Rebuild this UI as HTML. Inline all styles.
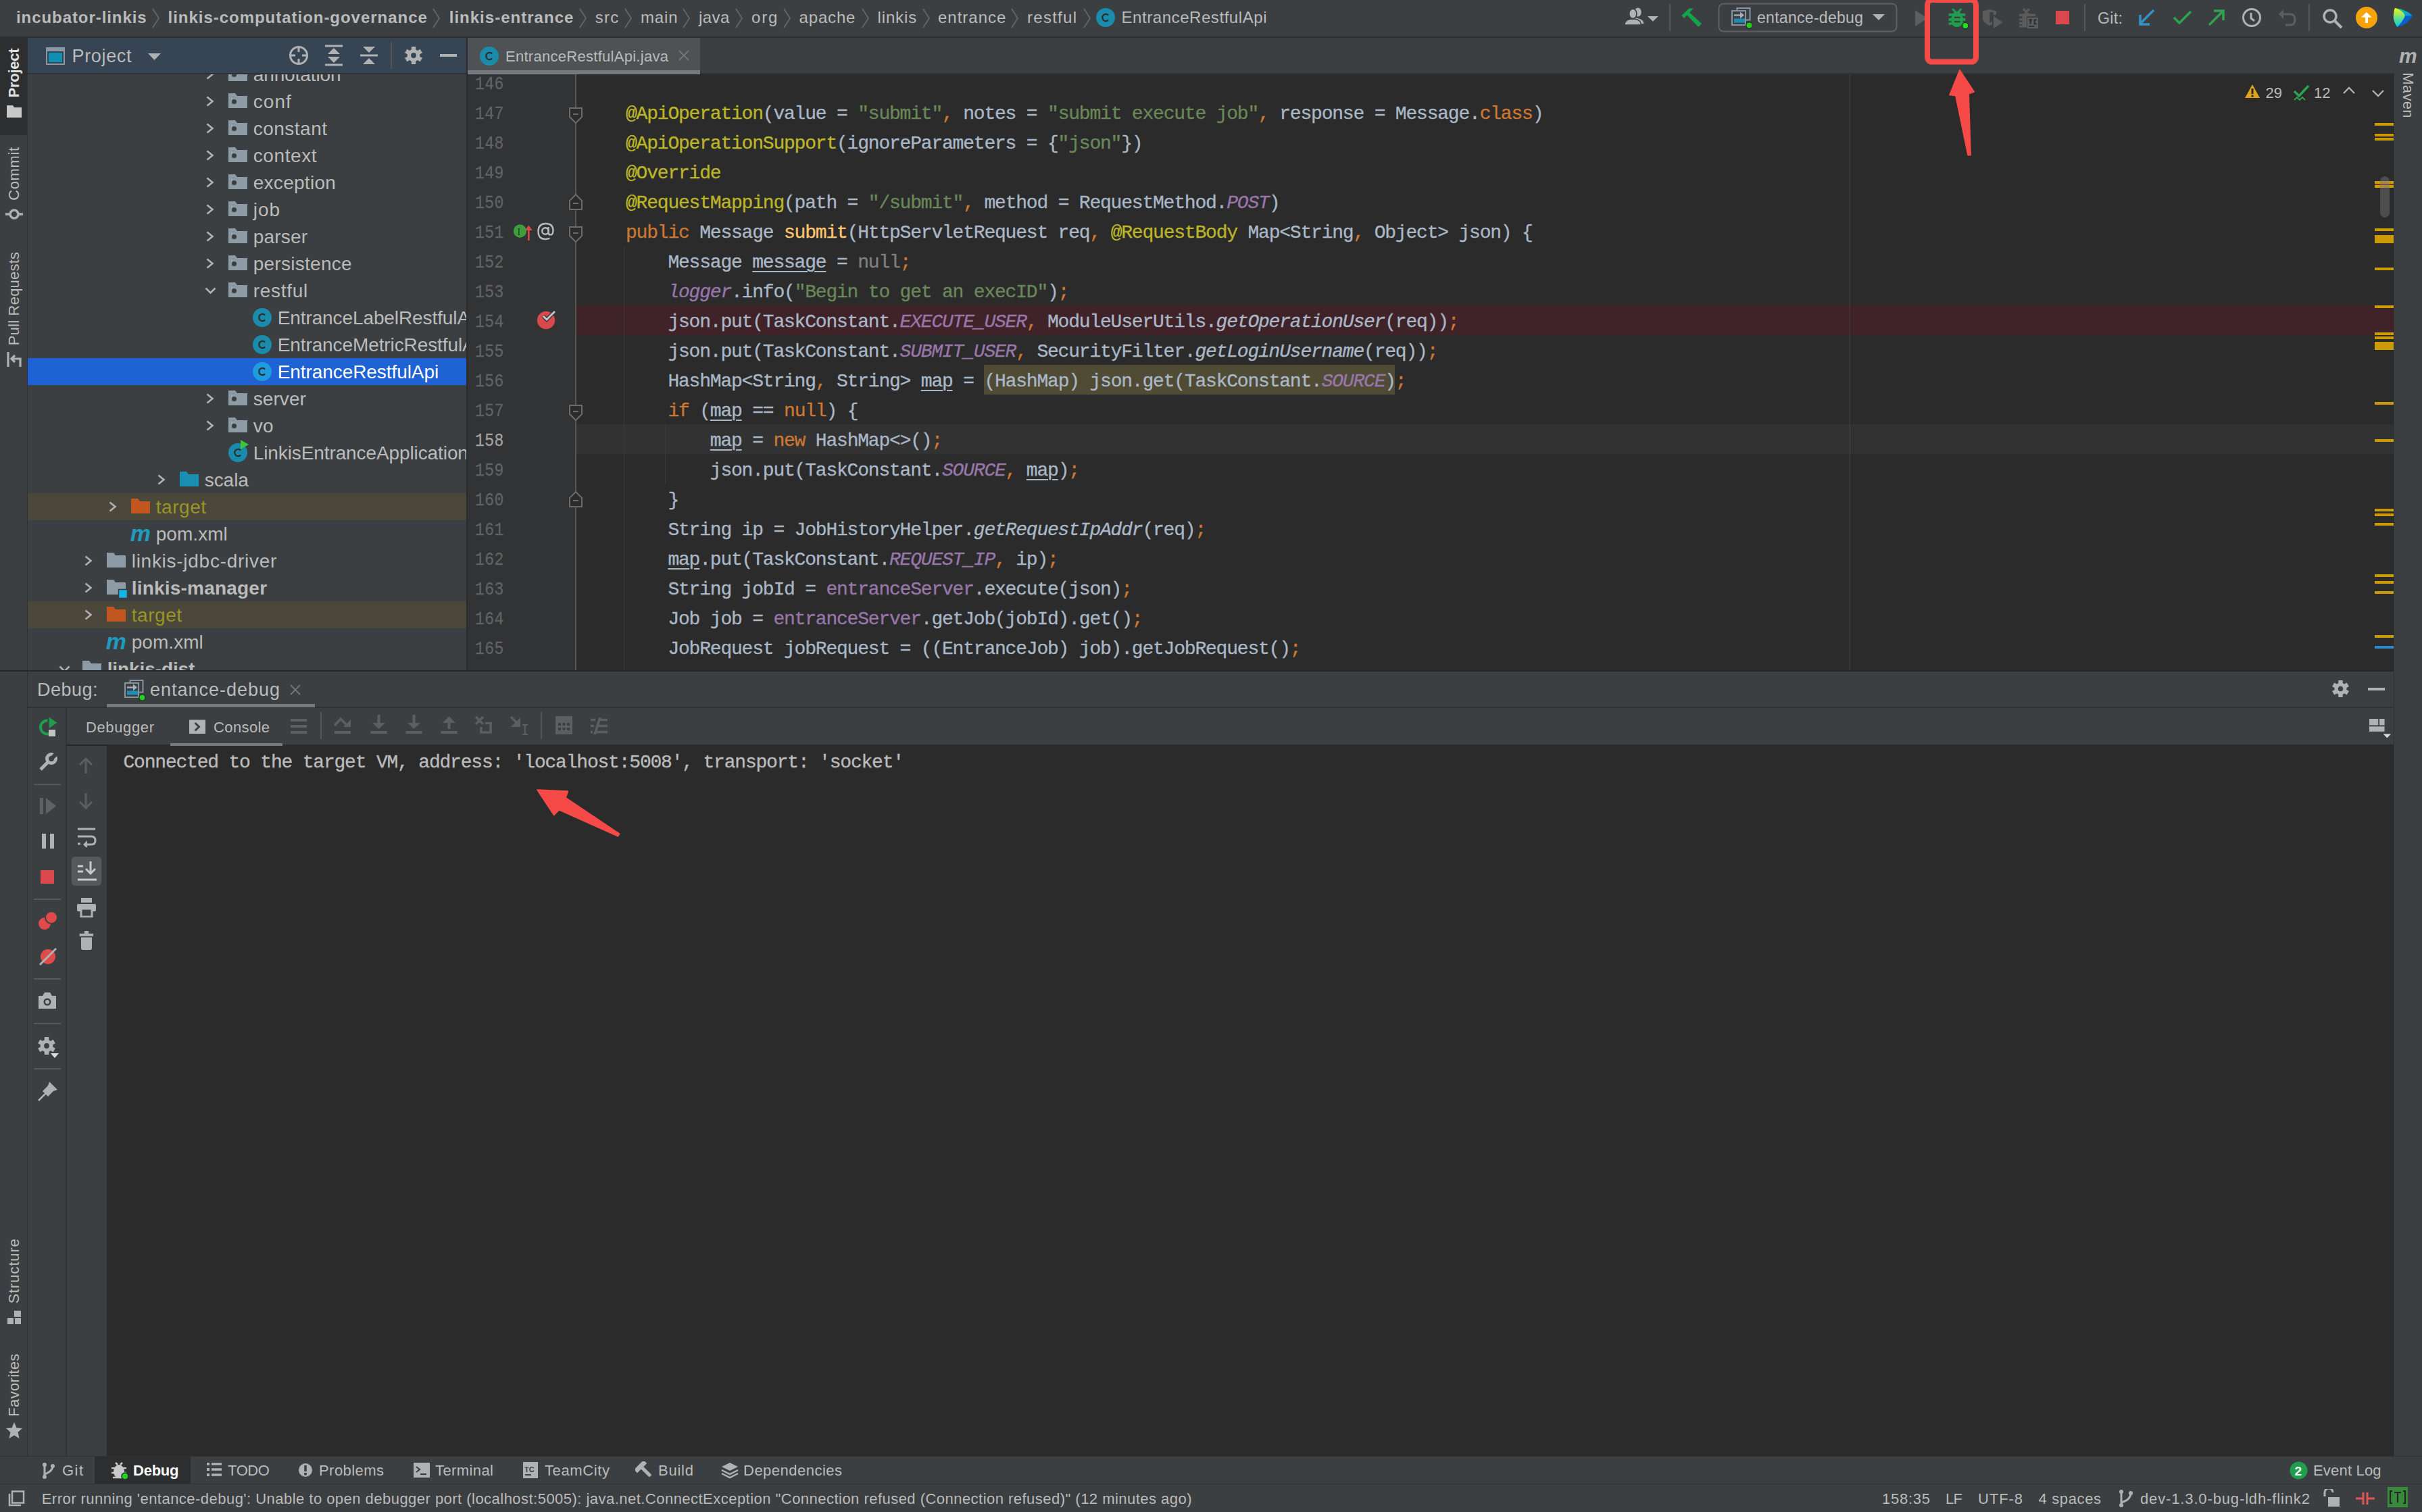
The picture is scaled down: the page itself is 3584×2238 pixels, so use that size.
<!DOCTYPE html><html><head><meta charset="utf-8"><style>
html,body{margin:0;padding:0;}
body{width:3584px;height:2238px;position:relative;overflow:hidden;background:#3C3F41;font-family:"Liberation Sans",sans-serif;}
body>div,body>svg{position:absolute;}
.t{white-space:pre;line-height:normal;}
</style></head><body>
<div style="left:0px;top:0px;width:3584px;height:54px;background:#3C3F41;"></div>
<div style="left:0px;top:54px;width:3584px;height:2px;background:#2E3032;"></div>
<div style="left:0px;top:56px;width:40px;height:2099px;background:#3C3F41;"></div>
<div style="left:40px;top:56px;width:2px;height:2099px;background:#2E3032;"></div>
<div style="left:0px;top:56px;width:40px;height:144px;background:#2C2E30;"></div>
<div style="left:3543px;top:56px;width:41px;height:2099px;background:#3C3F41;"></div>
<div style="left:3542px;top:56px;width:1px;height:2099px;background:#323232;"></div>
<div style="left:41px;top:56px;width:649px;height:52px;background:#364453;"></div>
<div style="left:41px;top:108px;width:649px;height:2px;background:#2E3134;"></div>
<div style="left:41px;top:110px;width:649px;height:882px;background:#3C3F41;"></div>
<div style="left:690px;top:56px;width:2px;height:937px;background:#2B2B2B;"></div>
<div style="left:692px;top:56px;width:2851px;height:54px;background:#3C3F41;"></div>
<div style="left:692px;top:56px;width:344px;height:54px;background:#4E5254;"></div>
<div style="left:692px;top:108px;width:2851px;height:2px;background:#303234;"></div>
<div style="left:692px;top:104px;width:344px;height:6px;background:#747A80;"></div>
<div style="left:692px;top:110px;width:160px;height:882px;background:#313335;"></div>
<div style="left:852px;top:110px;width:2690px;height:882px;background:#2B2B2B;"></div>
<div style="left:0px;top:992px;width:3542px;height:2px;background:#282828;"></div>
<div style="left:41px;top:994px;width:3501px;height:52px;background:#3C3F41;"></div>
<div style="left:41px;top:1046px;width:3501px;height:2px;background:#323232;"></div>
<div style="left:41px;top:1048px;width:3501px;height:54px;background:#3C3F41;"></div>
<div style="left:41px;top:1048px;width:56px;height:1107px;background:#3C3F41;"></div>
<div style="left:97px;top:1048px;width:2px;height:1107px;background:#323232;"></div>
<div style="left:99px;top:1102px;width:57px;height:1053px;background:#3C3F41;"></div>
<div style="left:99px;top:1102px;width:3443px;height:2px;background:#282828;"></div>
<div style="left:158px;top:1102px;width:3384px;height:1053px;background:#2B2B2B;"></div>
<div style="left:0px;top:2155px;width:3584px;height:41px;background:#3C3F41;"></div>
<div style="left:0px;top:2155px;width:3584px;height:1px;background:#323232;"></div>
<div style="left:0px;top:2196px;width:3584px;height:1px;background:#323232;"></div>
<div style="left:0px;top:2197px;width:3584px;height:41px;background:#3C3F41;"></div>
<div class="t" style="left:24px;top:12px;font-size:24px;color:#BBBBBB;font-weight:700;letter-spacing:0.93px;">incubator-linkis</div>
<div class="t" style="left:248.6px;top:12px;font-size:24px;color:#BBBBBB;font-weight:700;letter-spacing:0.97px;">linkis-computation-governance</div>
<div class="t" style="left:664.7px;top:12px;font-size:24px;color:#BBBBBB;font-weight:700;letter-spacing:1.02px;">linkis-entrance</div>
<div class="t" style="left:880.7px;top:12px;font-size:24px;color:#BBBBBB;letter-spacing:1.3px;">src</div>
<div class="t" style="left:948px;top:12px;font-size:24px;color:#BBBBBB;letter-spacing:0.83px;">main</div>
<div class="t" style="left:1034px;top:12px;font-size:24px;color:#BBBBBB;letter-spacing:0.46px;">java</div>
<div class="t" style="left:1112px;top:12px;font-size:24px;color:#BBBBBB;letter-spacing:1.81px;">org</div>
<div class="t" style="left:1182.5px;top:12px;font-size:24px;color:#BBBBBB;letter-spacing:0.84px;">apache</div>
<div class="t" style="left:1298.5px;top:12px;font-size:24px;color:#BBBBBB;letter-spacing:0.87px;">linkis</div>
<div class="t" style="left:1388px;top:12px;font-size:24px;color:#BBBBBB;letter-spacing:0.99px;">entrance</div>
<div class="t" style="left:1520px;top:12px;font-size:24px;color:#BBBBBB;letter-spacing:1.27px;">restful</div>
<svg style="left:225px;top:12px;" width="12" height="30" viewBox="0 0 12 30"><polyline points="1,1 10,15 1,29" fill="none" stroke="#5E686E" stroke-width="1.8"/></svg>
<svg style="left:640px;top:12px;" width="12" height="30" viewBox="0 0 12 30"><polyline points="1,1 10,15 1,29" fill="none" stroke="#5E686E" stroke-width="1.8"/></svg>
<svg style="left:856.5px;top:12px;" width="12" height="30" viewBox="0 0 12 30"><polyline points="1,1 10,15 1,29" fill="none" stroke="#5E686E" stroke-width="1.8"/></svg>
<svg style="left:924px;top:12px;" width="12" height="30" viewBox="0 0 12 30"><polyline points="1,1 10,15 1,29" fill="none" stroke="#5E686E" stroke-width="1.8"/></svg>
<svg style="left:1010px;top:12px;" width="12" height="30" viewBox="0 0 12 30"><polyline points="1,1 10,15 1,29" fill="none" stroke="#5E686E" stroke-width="1.8"/></svg>
<svg style="left:1088px;top:12px;" width="12" height="30" viewBox="0 0 12 30"><polyline points="1,1 10,15 1,29" fill="none" stroke="#5E686E" stroke-width="1.8"/></svg>
<svg style="left:1158.5px;top:12px;" width="12" height="30" viewBox="0 0 12 30"><polyline points="1,1 10,15 1,29" fill="none" stroke="#5E686E" stroke-width="1.8"/></svg>
<svg style="left:1274.5px;top:12px;" width="12" height="30" viewBox="0 0 12 30"><polyline points="1,1 10,15 1,29" fill="none" stroke="#5E686E" stroke-width="1.8"/></svg>
<svg style="left:1365px;top:12px;" width="12" height="30" viewBox="0 0 12 30"><polyline points="1,1 10,15 1,29" fill="none" stroke="#5E686E" stroke-width="1.8"/></svg>
<svg style="left:1496px;top:12px;" width="12" height="30" viewBox="0 0 12 30"><polyline points="1,1 10,15 1,29" fill="none" stroke="#5E686E" stroke-width="1.8"/></svg>
<svg style="left:1602.5px;top:12px;" width="12" height="30" viewBox="0 0 12 30"><polyline points="1,1 10,15 1,29" fill="none" stroke="#5E686E" stroke-width="1.8"/></svg>
<svg style="left:1622px;top:12px;" width="28" height="28" viewBox="0 0 28 28"><circle cx="14.0" cy="14.0" r="14.0" fill="#1A8BAA"/><path d="M18.2,10.4 A5.2,5.2 0 1 0 18.2,17.6" fill="none" stroke="#2B2B2B" stroke-width="2.2"/></svg>
<div class="t" style="left:1659.5px;top:12px;font-size:24px;color:#BBBBBB;letter-spacing:0.56px;">EntranceRestfulApi</div>
<svg style="left:2400px;top:8px;" width="56" height="34" viewBox="0 0 56 34"><ellipse cx="23.8" cy="10" rx="5" ry="6.6" fill="#AFB1B3"/><path d="M19,18.5 Q32.3,19.5 32.3,27 L24,27 Z" fill="#AFB1B3"/><ellipse cx="16.3" cy="12.3" rx="5.6" ry="7.2" fill="#AFB1B3" stroke="#3C3F41" stroke-width="1.6"/><path d="M3.9,29 Q4,21.5 13,20.3 L19.5,20.3 Q28.4,21.5 28.4,29 Z" fill="#AFB1B3" stroke="#3C3F41" stroke-width="1.6"/><polygon points="38,16 54,16 46,23.8" fill="#AFB1B3"/></svg>
<div style="left:2470px;top:6px;width:2px;height:40px;background:#55595C;"></div>
<svg style="left:2484px;top:8px;" width="36" height="36" viewBox="0 0 36 36"><polygon points="4.3,15.1 15.3,4.4 21.9,4.4 16.1,10.5 34,27 29.4,31.9 12.4,14.3 8.3,18.9" fill="#13A34B"/></svg>
<svg style="left:2542px;top:4px;" width="266" height="44" viewBox="0 0 266 44"><rect x="1.5" y="1.5" width="263" height="41" rx="7" fill="none" stroke="#5E6163" stroke-width="2"/></svg>
<svg style="left:2562px;top:11px;" width="34" height="34" viewBox="0 0 34 34"><path d="M8.5,4 V1 H27.5 V18.5 H21" fill="none" stroke="#8494A0" stroke-width="2"/><rect x="1" y="5" width="20" height="21" fill="#3C3F41" stroke="#8494A0" stroke-width="2"/><path d="M4,11.5 H15" stroke="#9FB0BC" stroke-width="2.4"/><polygon points="13,6.5 19,11.5 13,16.5" fill="#9FB0BC"/><rect x="4" y="16.5" width="16" height="6" fill="#1F8DB5"/><circle cx="26.5" cy="26.5" r="4.6" fill="#1FD41F" stroke="#2B2B2B" stroke-width="1.4"/></svg>
<div class="t" style="left:2600px;top:13px;font-size:23px;color:#BBBBBB;letter-spacing:0.29px;">entance-debug</div>
<svg style="left:2770px;top:20px;" width="20" height="12" viewBox="0 0 20 12"><polygon points="1,1 19,1 10,10" fill="#AFB1B3"/></svg>
<svg style="left:2834px;top:15px;" width="18" height="24" viewBox="0 0 18 24"><polygon points="0,0 18,12 0,24" fill="#5C5E60"/></svg>
<svg style="left:2880px;top:8px;" width="36" height="38" viewBox="0 0 36 38"><path d="M9,5 L14.5,10.5 M22.5,5 L17,10.5" stroke="#1F9D4C" stroke-width="3"/><path d="M10,14 Q10,9 16,9 Q22,9 22,14 L25,18 Q25,32 16,32 Q7,32 7,18Z" fill="#1F9D4C"/><rect x="3.6" y="11.8" width="24.7" height="4" fill="#1F9D4C"/><rect x="3.6" y="19" width="24.7" height="4" fill="#1F9D4C"/><rect x="3.6" y="25.3" width="24.7" height="3.5" fill="#1F9D4C"/><rect x="12" y="16.6" width="8.6" height="2.4" fill="#3C3F41"/><rect x="12" y="22.9" width="8.6" height="2.4" fill="#3C3F41"/><circle cx="28.3" cy="30" r="4.6" fill="#22E01F" stroke="#2B2B2B" stroke-width="1.4"/></svg>
<svg style="left:2932px;top:12px;" width="34" height="32" viewBox="0 0 34 32"><path d="M2,4.2 L12.2,2.1 L22,4.2 V9.9 H17.9 V6 H12.2 V21.8 L16,19.5 V23.9 L12.2,26 Q3.5,22 2,16.7 Z" fill="#5B5B5B"/><path d="M17.9,12 L31.6,20.9 L17.9,29.9 Z" fill="#5B5B5B"/></svg>
<svg style="left:2985px;top:12px;" width="34" height="32" viewBox="0 0 34 32"><path d="M9,1 L13.5,5.5 L18,1" stroke="#5B5B5B" stroke-width="3.2" fill="none"/><path d="M8,9 Q13.5,3.5 19,9 Z" fill="#5B5B5B"/><rect x="3" y="8.6" width="24" height="3.6" fill="#5B5B5B"/><rect x="7.5" y="12" width="6.5" height="16" fill="#5B5B5B"/><rect x="3" y="15.2" width="5" height="3.2" fill="#5B5B5B"/><rect x="3" y="20.8" width="5" height="3.2" fill="#5B5B5B"/><rect x="3" y="25.6" width="11" height="3" fill="#5B5B5B"/><rect x="15" y="14" width="16" height="16" fill="#5B5B5B"/><path d="M17.3,17.5 H22 M19.6,17.5 V23.6 M28.8,17.5 H25.6 V23.4 H28.8" stroke="#2B2B2B" stroke-width="1.9" fill="none"/><rect x="17.4" y="26.2" width="7.8" height="1.6" fill="#2B2B2B"/></svg>
<div style="left:3042px;top:16px;width:20px;height:20px;background:#D9484C;"></div>
<div style="left:3084px;top:6px;width:2px;height:40px;background:#55595C;"></div>
<div class="t" style="left:3104px;top:14px;font-size:23px;color:#BBBBBB;letter-spacing:0.41px;">Git:</div>
<svg style="left:3163px;top:12px;" width="28" height="28" viewBox="0 0 28 28"><path d="M24,3 L5,22 M4,10 V24 H18" stroke="#3592C4" stroke-width="3.5" fill="none"/></svg>
<svg style="left:3214px;top:12px;" width="32" height="28" viewBox="0 0 32 28"><path d="M3,14 L11,22 L28,5" stroke="#2EA34F" stroke-width="3.5" fill="none"/></svg>
<svg style="left:3266px;top:12px;" width="28" height="28" viewBox="0 0 28 28"><path d="M3,25 L22,6 M10,4 H24 V18" stroke="#2EA34F" stroke-width="3.5" fill="none"/></svg>
<svg style="left:3316px;top:10px;" width="32" height="32" viewBox="0 0 32 32"><circle cx="16" cy="16" r="12.5" fill="none" stroke="#AFB1B3" stroke-width="3"/><path d="M15,9 V17 L20,21" stroke="#AFB1B3" stroke-width="3" fill="none"/></svg>
<svg style="left:3370px;top:12px;" width="30" height="30" viewBox="0 0 30 30"><path d="M7,9 H19 Q26,9 26,17 Q26,25 19,25 H12" stroke="#5C5E60" stroke-width="3" fill="none"/><polygon points="2,9 9,2 9,16" fill="#5C5E60"/></svg>
<div style="left:3416px;top:6px;width:2px;height:40px;background:#55595C;"></div>
<svg style="left:3434.5px;top:10.5px;" width="34" height="34" viewBox="0 0 34 34"><circle cx="13" cy="13" r="9" fill="none" stroke="#AFB1B3" stroke-width="3.5"/><path d="M20,20 L30,30" stroke="#AFB1B3" stroke-width="4"/></svg>
<svg style="left:3485px;top:9px;" width="34" height="34" viewBox="0 0 34 34"><circle cx="17" cy="17" r="16" fill="#F6A40A"/><polygon points="9.1,16.7 24.7,16.7 16.9,8.9" fill="#FFFFFF"/><rect x="15.2" y="16" width="3.8" height="8.9" fill="#FFFFFF"/></svg>
<svg style="left:3538px;top:10px;" width="34" height="32" viewBox="0 0 34 32"><defs><linearGradient id="lgA" x1="0" y1="0" x2="0" y2="1"><stop offset="0" stop-color="#F6F90A"/><stop offset="0.5" stop-color="#6EE08A"/><stop offset="1" stop-color="#00C8E0"/></linearGradient><linearGradient id="lgB" x1="0" y1="0" x2="1" y2="1"><stop offset="0" stop-color="#10D080"/><stop offset="1" stop-color="#0A8EF0"/></linearGradient></defs><path d="M5.9,1.8 Q25,5 31.9,13.7 L20.8,13.7 Z" fill="url(#lgB)"/><path d="M20.8,13.7 L31.9,13.7 Q24,27 9.3,29.9 Z" fill="#0A5FCF"/><path d="M5.9,1.8 Q19,6 20.8,13.7 Q17,23 9.3,29.9 Q3.8,22 3.8,15.7 Q3.8,7 5.9,1.8 Z" fill="url(#lgA)"/></svg>
<div class="t" style="left:21px;top:107.5px;font-size:22px;color:#E0E0E0;transform:translate(-50%,-50%) rotate(-90deg);line-height:1;font-weight:700;letter-spacing:-0.26px;">Project</div>
<svg style="left:10px;top:156px;" width="22" height="18" viewBox="0 0 22 18"><path d="M0,0 H9 L11,3 H22 V18 H0Z" fill="#C8C8C8"/></svg>
<div class="t" style="left:21px;top:257px;font-size:22px;color:#BBBBBB;transform:translate(-50%,-50%) rotate(-90deg);line-height:1;letter-spacing:0.64px;">Commit</div>
<svg style="left:8px;top:306px;" width="26" height="22" viewBox="0 0 26 22"><circle cx="13" cy="11" r="6" fill="none" stroke="#AFB1B3" stroke-width="3.5"/><path d="M0,11 H6 M20,11 H26" stroke="#AFB1B3" stroke-width="3.5"/></svg>
<div class="t" style="left:21px;top:442px;font-size:22px;color:#BBBBBB;transform:translate(-50%,-50%) rotate(-90deg);line-height:1;letter-spacing:0.21px;">Pull Requests</div>
<svg style="left:10px;top:521px;" width="22" height="22" viewBox="0 0 22 22"><path d="M2,0 V22 M20,22 V10 H8 M12,5 L7,10 L12,15" stroke="#AFB1B3" stroke-width="3.2" fill="none"/></svg>
<div class="t" style="left:21px;top:1881px;font-size:22px;color:#BBBBBB;transform:translate(-50%,-50%) rotate(-90deg);line-height:1;letter-spacing:0.84px;">Structure</div>
<svg style="left:11px;top:1940px;" width="20" height="20" viewBox="0 0 20 20"><rect x="10" y="0" width="10" height="9" fill="#AFB1B3"/><rect x="0" y="11" width="9" height="9" fill="#AFB1B3"/><rect x="11" y="11" width="9" height="9" fill="#AFB1B3"/></svg>
<div class="t" style="left:21px;top:2050px;font-size:22px;color:#BBBBBB;transform:translate(-50%,-50%) rotate(-90deg);line-height:1;letter-spacing:0.32px;">Favorites</div>
<svg style="left:8px;top:2104px;" width="26" height="26" viewBox="0 0 26 26"><polygon points="13,1 16.5,9.5 25,10 18.5,16 20.5,25 13,20.5 5.5,25 7.5,16 1,10 9.5,9.5" fill="#AFB1B3"/></svg>
<div class="t" style="left:3550px;top:66px;font-size:30px;color:#AFB1B3;font-weight:700;font-style:italic;">m</div>
<div class="t" style="left:3563px;top:141px;font-size:22px;color:#BBBBBB;transform:translate(-50%,-50%) rotate(90deg);line-height:1;letter-spacing:0.3px">Maven</div>
<svg style="left:68px;top:70px;" width="28" height="26" viewBox="0 0 28 26"><rect x="0" y="0" width="28" height="26" fill="#8898A4"/><rect x="2" y="6" width="24" height="18" fill="#364453"/><rect x="4" y="8" width="20" height="14" fill="#108FB3"/></svg>
<div class="t" style="left:106.5px;top:68px;font-size:27px;color:#BBBBBB;letter-spacing:0.66px;">Project</div>
<svg style="left:219px;top:79px;" width="19" height="10" viewBox="0 0 19 10"><polygon points="0,0 19,0 9.5,10" fill="#AFB1B3"/></svg>
<svg style="left:426px;top:66px;" width="32" height="32" viewBox="0 0 32 32"><circle cx="16" cy="16" r="12.5" fill="none" stroke="#AFB1B3" stroke-width="3"/><path d="M16,3 V11 M16,21 V29 M3,16 H11 M21,16 H29" stroke="#AFB1B3" stroke-width="3"/></svg>
<svg style="left:480px;top:66px;" width="28" height="32" viewBox="0 0 28 32"><path d="M1,2 H27 M1,30 H27" stroke="#AFB1B3" stroke-width="3"/><polygon points="14,5 23,14 5,14" fill="#AFB1B3"/><polygon points="5,18 23,18 14,27" fill="#AFB1B3"/></svg>
<svg style="left:532px;top:66px;" width="28" height="32" viewBox="0 0 28 32"><path d="M1,16 H27" stroke="#AFB1B3" stroke-width="3"/><polygon points="5,3 23,3 14,12" fill="#AFB1B3"/><polygon points="14,20 23,29 5,29" fill="#AFB1B3"/></svg>
<div style="left:578px;top:62px;width:2px;height:40px;background:#56524C;"></div>
<svg style="left:599px;top:69px;" width="26" height="26" viewBox="0 0 26 26"><rect x="9.8" y="0" width="6.4" height="26" fill="#AFB1B3" transform="rotate(0 13.0 13.0)"/><rect x="9.8" y="0" width="6.4" height="26" fill="#AFB1B3" transform="rotate(60 13.0 13.0)"/><rect x="9.8" y="0" width="6.4" height="26" fill="#AFB1B3" transform="rotate(120 13.0 13.0)"/><circle cx="13.0" cy="13.0" r="9.36" fill="#AFB1B3"/><circle cx="13.0" cy="13.0" r="3.9" fill="#364453"/></svg>
<div style="left:651px;top:80px;width:25px;height:4px;background:#AFB1B3;"></div>
<svg style="left:710px;top:69px;" width="28" height="28" viewBox="0 0 28 28"><circle cx="14.0" cy="14.0" r="14.0" fill="#1A8BAA"/><path d="M18.2,10.4 A5.2,5.2 0 1 0 18.2,17.6" fill="none" stroke="#2B2B2B" stroke-width="2.2"/></svg>
<div class="t" style="left:748px;top:71px;font-size:22px;color:#BBBBBB;letter-spacing:0.28px;">EntranceRestfulApi.java</div>
<svg style="left:1004px;top:74px;" width="16" height="16" viewBox="0 0 16 16"><path d="M1,1 L15,15 M15,1 L1,15" stroke="#6F7A80" stroke-width="1.8"/></svg>
<div style="left:41px;top:110px;width:649px;height:882px;overflow:hidden;">
<svg style="position:absolute;left:263.7px;top:-8.0px;" width="12" height="16" viewBox="0 0 12 16"><polyline points="1.5,1.5 9.5,8 1.5,14.5" fill="none" stroke="#AFB1B3" stroke-width="2.6"/></svg>
<svg style="position:absolute;left:296.7px;top:-12.0px;" width="32" height="29" viewBox="0 0 32 29"><path d="M0,0 H10 L13,4 H28 V22 H0Z" fill="#8D9BA6"/><circle cx="8.5" cy="12.5" r="3.6" fill="#3C3F41"/></svg>
<div class="t" style="position:absolute;left:333.7px;top:-15.0px;font-size:28px;color:#BBBBBB;letter-spacing:-0.1px;">annotation</div>
<svg style="position:absolute;left:263.7px;top:32.0px;" width="12" height="16" viewBox="0 0 12 16"><polyline points="1.5,1.5 9.5,8 1.5,14.5" fill="none" stroke="#AFB1B3" stroke-width="2.6"/></svg>
<svg style="position:absolute;left:296.7px;top:28.0px;" width="32" height="29" viewBox="0 0 32 29"><path d="M0,0 H10 L13,4 H28 V22 H0Z" fill="#8D9BA6"/><circle cx="8.5" cy="12.5" r="3.6" fill="#3C3F41"/></svg>
<div class="t" style="position:absolute;left:333.7px;top:25.0px;font-size:28px;color:#BBBBBB;letter-spacing:1.09px;">conf</div>
<svg style="position:absolute;left:263.7px;top:72.0px;" width="12" height="16" viewBox="0 0 12 16"><polyline points="1.5,1.5 9.5,8 1.5,14.5" fill="none" stroke="#AFB1B3" stroke-width="2.6"/></svg>
<svg style="position:absolute;left:296.7px;top:68.0px;" width="32" height="29" viewBox="0 0 32 29"><path d="M0,0 H10 L13,4 H28 V22 H0Z" fill="#8D9BA6"/><circle cx="8.5" cy="12.5" r="3.6" fill="#3C3F41"/></svg>
<div class="t" style="position:absolute;left:333.7px;top:65.0px;font-size:28px;color:#BBBBBB;letter-spacing:0.5px;">constant</div>
<svg style="position:absolute;left:263.7px;top:112.0px;" width="12" height="16" viewBox="0 0 12 16"><polyline points="1.5,1.5 9.5,8 1.5,14.5" fill="none" stroke="#AFB1B3" stroke-width="2.6"/></svg>
<svg style="position:absolute;left:296.7px;top:108.0px;" width="32" height="29" viewBox="0 0 32 29"><path d="M0,0 H10 L13,4 H28 V22 H0Z" fill="#8D9BA6"/><circle cx="8.5" cy="12.5" r="3.6" fill="#3C3F41"/></svg>
<div class="t" style="position:absolute;left:333.7px;top:105.0px;font-size:28px;color:#BBBBBB;letter-spacing:0.6px;">context</div>
<svg style="position:absolute;left:263.7px;top:152.0px;" width="12" height="16" viewBox="0 0 12 16"><polyline points="1.5,1.5 9.5,8 1.5,14.5" fill="none" stroke="#AFB1B3" stroke-width="2.6"/></svg>
<svg style="position:absolute;left:296.7px;top:148.0px;" width="32" height="29" viewBox="0 0 32 29"><path d="M0,0 H10 L13,4 H28 V22 H0Z" fill="#8D9BA6"/><circle cx="8.5" cy="12.5" r="3.6" fill="#3C3F41"/></svg>
<div class="t" style="position:absolute;left:333.7px;top:145.0px;font-size:28px;color:#BBBBBB;letter-spacing:0.29px;">exception</div>
<svg style="position:absolute;left:263.7px;top:192.0px;" width="12" height="16" viewBox="0 0 12 16"><polyline points="1.5,1.5 9.5,8 1.5,14.5" fill="none" stroke="#AFB1B3" stroke-width="2.6"/></svg>
<svg style="position:absolute;left:296.7px;top:188.0px;" width="32" height="29" viewBox="0 0 32 29"><path d="M0,0 H10 L13,4 H28 V22 H0Z" fill="#8D9BA6"/><circle cx="8.5" cy="12.5" r="3.6" fill="#3C3F41"/></svg>
<div class="t" style="position:absolute;left:333.7px;top:185.0px;font-size:28px;color:#BBBBBB;letter-spacing:1.01px;">job</div>
<svg style="position:absolute;left:263.7px;top:232.0px;" width="12" height="16" viewBox="0 0 12 16"><polyline points="1.5,1.5 9.5,8 1.5,14.5" fill="none" stroke="#AFB1B3" stroke-width="2.6"/></svg>
<svg style="position:absolute;left:296.7px;top:228.0px;" width="32" height="29" viewBox="0 0 32 29"><path d="M0,0 H10 L13,4 H28 V22 H0Z" fill="#8D9BA6"/><circle cx="8.5" cy="12.5" r="3.6" fill="#3C3F41"/></svg>
<div class="t" style="position:absolute;left:333.7px;top:225.0px;font-size:28px;color:#BBBBBB;letter-spacing:0.22px;">parser</div>
<svg style="position:absolute;left:263.7px;top:272.0px;" width="12" height="16" viewBox="0 0 12 16"><polyline points="1.5,1.5 9.5,8 1.5,14.5" fill="none" stroke="#AFB1B3" stroke-width="2.6"/></svg>
<svg style="position:absolute;left:296.7px;top:268.0px;" width="32" height="29" viewBox="0 0 32 29"><path d="M0,0 H10 L13,4 H28 V22 H0Z" fill="#8D9BA6"/><circle cx="8.5" cy="12.5" r="3.6" fill="#3C3F41"/></svg>
<div class="t" style="position:absolute;left:333.7px;top:265.0px;font-size:28px;color:#BBBBBB;letter-spacing:0.27px;">persistence</div>
<svg style="position:absolute;left:261.7px;top:315.0px;" width="17" height="11" viewBox="0 0 17 11"><polyline points="1.5,1.5 8.5,8.5 15.5,1.5" fill="none" stroke="#AFB1B3" stroke-width="2.6"/></svg>
<svg style="position:absolute;left:296.7px;top:308.0px;" width="32" height="29" viewBox="0 0 32 29"><path d="M0,0 H10 L13,4 H28 V22 H0Z" fill="#8D9BA6"/><circle cx="8.5" cy="12.5" r="3.6" fill="#3C3F41"/></svg>
<div class="t" style="position:absolute;left:333.7px;top:305.0px;font-size:28px;color:#BBBBBB;letter-spacing:0.71px;">restful</div>
<svg style="position:absolute;left:332.7px;top:346.0px;" width="28" height="28" viewBox="0 0 28 28"><circle cx="14.0" cy="14.0" r="14.0" fill="#1A8BAA"/><path d="M18.2,10.4 A5.2,5.2 0 1 0 18.2,17.6" fill="none" stroke="#2B2B2B" stroke-width="2.2"/></svg>
<div class="t" style="position:absolute;left:369.7px;top:345.0px;font-size:28px;color:#BBBBBB;letter-spacing:-0.1px;">EntranceLabelRestfulApi</div>
<svg style="position:absolute;left:332.7px;top:386.0px;" width="28" height="28" viewBox="0 0 28 28"><circle cx="14.0" cy="14.0" r="14.0" fill="#1A8BAA"/><path d="M18.2,10.4 A5.2,5.2 0 1 0 18.2,17.6" fill="none" stroke="#2B2B2B" stroke-width="2.2"/></svg>
<div class="t" style="position:absolute;left:369.7px;top:385.0px;font-size:28px;color:#BBBBBB;letter-spacing:-0.1px;">EntranceMetricRestfulApi</div>
<div style="position:absolute;left:0.0px;top:420.0px;width:649px;height:40px;background:#1F62D3;"></div>
<svg style="position:absolute;left:332.7px;top:426.0px;" width="28" height="28" viewBox="0 0 28 28"><circle cx="14.0" cy="14.0" r="14.0" fill="#1E9CDB"/><path d="M18.2,10.4 A5.2,5.2 0 1 0 18.2,17.6" fill="none" stroke="#2B2B2B" stroke-width="2.2"/></svg>
<div class="t" style="position:absolute;left:369.7px;top:425.0px;font-size:28px;color:#FFFFFF;letter-spacing:-0.07px;">EntranceRestfulApi</div>
<svg style="position:absolute;left:263.7px;top:472.0px;" width="12" height="16" viewBox="0 0 12 16"><polyline points="1.5,1.5 9.5,8 1.5,14.5" fill="none" stroke="#AFB1B3" stroke-width="2.6"/></svg>
<svg style="position:absolute;left:296.7px;top:468.0px;" width="32" height="29" viewBox="0 0 32 29"><path d="M0,0 H10 L13,4 H28 V22 H0Z" fill="#8D9BA6"/><circle cx="8.5" cy="12.5" r="3.6" fill="#3C3F41"/></svg>
<div class="t" style="position:absolute;left:333.7px;top:465.0px;font-size:28px;color:#BBBBBB;letter-spacing:0.08px;">server</div>
<svg style="position:absolute;left:263.7px;top:512.0px;" width="12" height="16" viewBox="0 0 12 16"><polyline points="1.5,1.5 9.5,8 1.5,14.5" fill="none" stroke="#AFB1B3" stroke-width="2.6"/></svg>
<svg style="position:absolute;left:296.7px;top:508.0px;" width="32" height="29" viewBox="0 0 32 29"><path d="M0,0 H10 L13,4 H28 V22 H0Z" fill="#8D9BA6"/><circle cx="8.5" cy="12.5" r="3.6" fill="#3C3F41"/></svg>
<div class="t" style="position:absolute;left:333.7px;top:505.0px;font-size:28px;color:#BBBBBB;letter-spacing:0.32px;">vo</div>
<svg style="position:absolute;left:296.7px;top:546.0px;" width="28" height="28" viewBox="0 0 28 28"><circle cx="14.0" cy="14.0" r="14.0" fill="#1A8BAA"/><path d="M18.2,10.4 A5.2,5.2 0 1 0 18.2,17.6" fill="none" stroke="#2B2B2B" stroke-width="2.2"/></svg>
<svg style="position:absolute;left:314.7px;top:541.0px;" width="12" height="14" viewBox="0 0 12 14"><polygon points="0,0 12,7 0,14" fill="#3FC53F"/></svg>
<div class="t" style="position:absolute;left:333.7px;top:545.0px;font-size:28px;color:#BBBBBB;letter-spacing:-0.1px;">LinkisEntranceApplication</div>
<svg style="position:absolute;left:191.7px;top:592.0px;" width="12" height="16" viewBox="0 0 12 16"><polyline points="1.5,1.5 9.5,8 1.5,14.5" fill="none" stroke="#AFB1B3" stroke-width="2.6"/></svg>
<svg style="position:absolute;left:224.7px;top:588.0px;" width="32" height="29" viewBox="0 0 32 29"><path d="M0,0 H10 L13,4 H28 V22 H0Z" fill="#1B8FB0"/></svg>
<div class="t" style="position:absolute;left:261.7px;top:585.0px;font-size:28px;color:#BBBBBB;letter-spacing:-0.04px;">scala</div>
<div style="position:absolute;left:0.0px;top:620.0px;width:649px;height:40px;background:#4C473B;"></div>
<svg style="position:absolute;left:119.7px;top:632.0px;" width="12" height="16" viewBox="0 0 12 16"><polyline points="1.5,1.5 9.5,8 1.5,14.5" fill="none" stroke="#AFB1B3" stroke-width="2.6"/></svg>
<svg style="position:absolute;left:152.7px;top:628.0px;" width="32" height="29" viewBox="0 0 32 29"><path d="M0,0 H10 L13,4 H28 V22 H0Z" fill="#C2561F"/></svg>
<div class="t" style="position:absolute;left:189.7px;top:625.0px;font-size:28px;color:#979524;letter-spacing:0.57px;">target</div>
<div class="t" style="position:absolute;left:151.7px;top:660.0px;font-size:34px;color:#1E9CC0;font-weight:700;letter-spacing:-1px;font-style:italic;">m</div>
<div class="t" style="position:absolute;left:189.7px;top:665.0px;font-size:28px;color:#BBBBBB;letter-spacing:0.06px;">pom.xml</div>
<svg style="position:absolute;left:83.7px;top:712.0px;" width="12" height="16" viewBox="0 0 12 16"><polyline points="1.5,1.5 9.5,8 1.5,14.5" fill="none" stroke="#AFB1B3" stroke-width="2.6"/></svg>
<svg style="position:absolute;left:116.7px;top:708.0px;" width="32" height="29" viewBox="0 0 32 29"><path d="M0,0 H10 L13,4 H28 V22 H0Z" fill="#8D9BA6"/></svg>
<div class="t" style="position:absolute;left:153.7px;top:705.0px;font-size:28px;color:#BBBBBB;letter-spacing:0.73px;">linkis-jdbc-driver</div>
<svg style="position:absolute;left:83.7px;top:752.0px;" width="12" height="16" viewBox="0 0 12 16"><polyline points="1.5,1.5 9.5,8 1.5,14.5" fill="none" stroke="#AFB1B3" stroke-width="2.6"/></svg>
<svg style="position:absolute;left:116.7px;top:748.0px;" width="32" height="29" viewBox="0 0 32 29"><path d="M0,0 H10 L13,4 H28 V22 H0Z" fill="#8D9BA6"/><rect x="17.5" y="14.5" width="13" height="13" fill="#14B6E6" stroke="#3C3F41" stroke-width="1.6"/></svg>
<div class="t" style="position:absolute;left:153.7px;top:745.0px;font-size:28px;color:#BBBBBB;font-weight:700;letter-spacing:0.21px;">linkis-manager</div>
<div style="position:absolute;left:0.0px;top:780.0px;width:649px;height:40px;background:#4C473B;"></div>
<svg style="position:absolute;left:83.7px;top:792.0px;" width="12" height="16" viewBox="0 0 12 16"><polyline points="1.5,1.5 9.5,8 1.5,14.5" fill="none" stroke="#AFB1B3" stroke-width="2.6"/></svg>
<svg style="position:absolute;left:116.7px;top:788.0px;" width="32" height="29" viewBox="0 0 32 29"><path d="M0,0 H10 L13,4 H28 V22 H0Z" fill="#C2561F"/></svg>
<div class="t" style="position:absolute;left:153.7px;top:785.0px;font-size:28px;color:#979524;letter-spacing:0.57px;">target</div>
<div class="t" style="position:absolute;left:115.7px;top:820.0px;font-size:34px;color:#1E9CC0;font-weight:700;letter-spacing:-1px;font-style:italic;">m</div>
<div class="t" style="position:absolute;left:153.7px;top:825.0px;font-size:28px;color:#BBBBBB;letter-spacing:0.06px;">pom.xml</div>
<svg style="position:absolute;left:45.7px;top:875.0px;" width="17" height="11" viewBox="0 0 17 11"><polyline points="1.5,1.5 8.5,8.5 15.5,1.5" fill="none" stroke="#AFB1B3" stroke-width="2.6"/></svg>
<svg style="position:absolute;left:80.7px;top:868.0px;" width="32" height="29" viewBox="0 0 32 29"><path d="M0,0 H10 L13,4 H28 V22 H0Z" fill="#8D9BA6"/></svg>
<div class="t" style="position:absolute;left:117.7px;top:865.0px;font-size:28px;color:#BBBBBB;font-weight:700;letter-spacing:-0.1px;">linkis-dist</div>
</div>
<div style="left:852px;top:628px;width:2690px;height:44px;background:#323232;"></div>
<div style="left:852px;top:452px;width:2690px;height:44px;background:#402328;"></div>
<div style="left:2737px;top:110px;width:1px;height:882px;background:#454545;"></div>
<div style="left:1456px;top:540px;width:608px;height:44px;background:#4F4B34;"></div>
<div style="left:923px;top:364px;width:1px;height:628px;background:#393939;"></div>
<div style="left:984px;top:628px;width:1px;height:88px;background:#393939;"></div>
<div style="left:851px;top:110px;width:2px;height:882px;background:#555555;"></div>
<div class="t" style="left:702.5px;top:109px;font-size:28px;color:#606366;font-family:'Liberation Mono',monospace;letter-spacing:0.52px;-webkit-text-stroke:0.3px currentColor;transform:scaleX(0.82);transform-origin:0 0;">146</div>
<div class="t" style="left:702.5px;top:153px;font-size:28px;color:#606366;font-family:'Liberation Mono',monospace;letter-spacing:0.52px;-webkit-text-stroke:0.3px currentColor;transform:scaleX(0.82);transform-origin:0 0;">147</div>
<div class="t" style="left:863.6px;top:153px;font-size:28px;color:#BBBBBB;font-family:'Liberation Mono',monospace;letter-spacing:-1.203px;-webkit-text-stroke:0.35px currentColor;"><span style="color:#A9B7C6">    </span><span style="color:#BBB529">@ApiOperation</span><span style="color:#A9B7C6">(value = </span><span style="color:#6A8759">"submit"</span><span style="color:#CC7832">,</span><span style="color:#A9B7C6"> notes = </span><span style="color:#6A8759">"submit execute job"</span><span style="color:#CC7832">,</span><span style="color:#A9B7C6"> response = Message.</span><span style="color:#CC7832">class</span><span style="color:#A9B7C6">)</span></div>
<div class="t" style="left:702.5px;top:197px;font-size:28px;color:#606366;font-family:'Liberation Mono',monospace;letter-spacing:0.52px;-webkit-text-stroke:0.3px currentColor;transform:scaleX(0.82);transform-origin:0 0;">148</div>
<div class="t" style="left:863.6px;top:197px;font-size:28px;color:#BBBBBB;font-family:'Liberation Mono',monospace;letter-spacing:-1.203px;-webkit-text-stroke:0.35px currentColor;"><span style="color:#A9B7C6">    </span><span style="color:#BBB529">@ApiOperationSupport</span><span style="color:#A9B7C6">(ignoreParameters = {</span><span style="color:#6A8759">"json"</span><span style="color:#A9B7C6">})</span></div>
<div class="t" style="left:702.5px;top:241px;font-size:28px;color:#606366;font-family:'Liberation Mono',monospace;letter-spacing:0.52px;-webkit-text-stroke:0.3px currentColor;transform:scaleX(0.82);transform-origin:0 0;">149</div>
<div class="t" style="left:863.6px;top:241px;font-size:28px;color:#BBBBBB;font-family:'Liberation Mono',monospace;letter-spacing:-1.203px;-webkit-text-stroke:0.35px currentColor;"><span style="color:#A9B7C6">    </span><span style="color:#BBB529">@Override</span></div>
<div class="t" style="left:702.5px;top:285px;font-size:28px;color:#606366;font-family:'Liberation Mono',monospace;letter-spacing:0.52px;-webkit-text-stroke:0.3px currentColor;transform:scaleX(0.82);transform-origin:0 0;">150</div>
<div class="t" style="left:863.6px;top:285px;font-size:28px;color:#BBBBBB;font-family:'Liberation Mono',monospace;letter-spacing:-1.203px;-webkit-text-stroke:0.35px currentColor;"><span style="color:#A9B7C6">    </span><span style="color:#BBB529">@RequestMapping</span><span style="color:#A9B7C6">(path = </span><span style="color:#6A8759">"/submit"</span><span style="color:#CC7832">,</span><span style="color:#A9B7C6"> method = RequestMethod.</span><span style="color:#9876AA;font-style:italic">POST</span><span style="color:#A9B7C6">)</span></div>
<div class="t" style="left:702.5px;top:329px;font-size:28px;color:#606366;font-family:'Liberation Mono',monospace;letter-spacing:0.52px;-webkit-text-stroke:0.3px currentColor;transform:scaleX(0.82);transform-origin:0 0;">151</div>
<div class="t" style="left:863.6px;top:329px;font-size:28px;color:#BBBBBB;font-family:'Liberation Mono',monospace;letter-spacing:-1.203px;-webkit-text-stroke:0.35px currentColor;"><span style="color:#A9B7C6">    </span><span style="color:#CC7832">public</span><span style="color:#A9B7C6"> Message </span><span style="color:#FFC66D">submit</span><span style="color:#A9B7C6">(HttpServletRequest req</span><span style="color:#CC7832">,</span><span style="color:#A9B7C6"> </span><span style="color:#BBB529">@RequestBody</span><span style="color:#A9B7C6"> Map&lt;String</span><span style="color:#CC7832">,</span><span style="color:#A9B7C6"> Object&gt; json) {</span></div>
<div class="t" style="left:702.5px;top:373px;font-size:28px;color:#606366;font-family:'Liberation Mono',monospace;letter-spacing:0.52px;-webkit-text-stroke:0.3px currentColor;transform:scaleX(0.82);transform-origin:0 0;">152</div>
<div class="t" style="left:863.6px;top:373px;font-size:28px;color:#BBBBBB;font-family:'Liberation Mono',monospace;letter-spacing:-1.203px;-webkit-text-stroke:0.35px currentColor;"><span style="color:#A9B7C6">        Message </span><span style="color:#A9B7C6;text-decoration:underline;text-underline-offset:5px;text-decoration-thickness:2px">message</span><span style="color:#A9B7C6"> = </span><span style="color:#808080">null</span><span style="color:#CC7832">;</span></div>
<div class="t" style="left:702.5px;top:417px;font-size:28px;color:#606366;font-family:'Liberation Mono',monospace;letter-spacing:0.52px;-webkit-text-stroke:0.3px currentColor;transform:scaleX(0.82);transform-origin:0 0;">153</div>
<div class="t" style="left:863.6px;top:417px;font-size:28px;color:#BBBBBB;font-family:'Liberation Mono',monospace;letter-spacing:-1.203px;-webkit-text-stroke:0.35px currentColor;"><span style="color:#A9B7C6">        </span><span style="color:#9876AA;font-style:italic">logger</span><span style="color:#A9B7C6">.info(</span><span style="color:#6A8759">"Begin to get an execID"</span><span style="color:#A9B7C6">)</span><span style="color:#CC7832">;</span></div>
<div class="t" style="left:702.5px;top:461px;font-size:28px;color:#606366;font-family:'Liberation Mono',monospace;letter-spacing:0.52px;-webkit-text-stroke:0.3px currentColor;transform:scaleX(0.82);transform-origin:0 0;">154</div>
<div class="t" style="left:863.6px;top:461px;font-size:28px;color:#BBBBBB;font-family:'Liberation Mono',monospace;letter-spacing:-1.203px;-webkit-text-stroke:0.35px currentColor;"><span style="color:#A9B7C6">        json.put(TaskConstant.</span><span style="color:#9876AA;font-style:italic">EXECUTE_USER</span><span style="color:#CC7832">,</span><span style="color:#A9B7C6"> ModuleUserUtils.</span><span style="color:#A9B7C6;font-style:italic">getOperationUser</span><span style="color:#A9B7C6">(req))</span><span style="color:#CC7832">;</span></div>
<div class="t" style="left:702.5px;top:505px;font-size:28px;color:#606366;font-family:'Liberation Mono',monospace;letter-spacing:0.52px;-webkit-text-stroke:0.3px currentColor;transform:scaleX(0.82);transform-origin:0 0;">155</div>
<div class="t" style="left:863.6px;top:505px;font-size:28px;color:#BBBBBB;font-family:'Liberation Mono',monospace;letter-spacing:-1.203px;-webkit-text-stroke:0.35px currentColor;"><span style="color:#A9B7C6">        json.put(TaskConstant.</span><span style="color:#9876AA;font-style:italic">SUBMIT_USER</span><span style="color:#CC7832">,</span><span style="color:#A9B7C6"> SecurityFilter.</span><span style="color:#A9B7C6;font-style:italic">getLoginUsername</span><span style="color:#A9B7C6">(req))</span><span style="color:#CC7832">;</span></div>
<div class="t" style="left:702.5px;top:549px;font-size:28px;color:#606366;font-family:'Liberation Mono',monospace;letter-spacing:0.52px;-webkit-text-stroke:0.3px currentColor;transform:scaleX(0.82);transform-origin:0 0;">156</div>
<div class="t" style="left:863.6px;top:549px;font-size:28px;color:#BBBBBB;font-family:'Liberation Mono',monospace;letter-spacing:-1.203px;-webkit-text-stroke:0.35px currentColor;"><span style="color:#A9B7C6">        HashMap&lt;String</span><span style="color:#CC7832">,</span><span style="color:#A9B7C6"> String&gt; </span><span style="color:#A9B7C6;text-decoration:underline;text-underline-offset:5px;text-decoration-thickness:2px">map</span><span style="color:#A9B7C6"> = </span><span style="color:#A9B7C6">(HashMap) json.get(TaskConstant.</span><span style="color:#9876AA;font-style:italic">SOURCE</span><span style="color:#A9B7C6">)</span><span style="color:#CC7832">;</span></div>
<div class="t" style="left:702.5px;top:593px;font-size:28px;color:#606366;font-family:'Liberation Mono',monospace;letter-spacing:0.52px;-webkit-text-stroke:0.3px currentColor;transform:scaleX(0.82);transform-origin:0 0;">157</div>
<div class="t" style="left:863.6px;top:593px;font-size:28px;color:#BBBBBB;font-family:'Liberation Mono',monospace;letter-spacing:-1.203px;-webkit-text-stroke:0.35px currentColor;"><span style="color:#A9B7C6">        </span><span style="color:#CC7832">if</span><span style="color:#A9B7C6"> (</span><span style="color:#A9B7C6;text-decoration:underline;text-underline-offset:5px;text-decoration-thickness:2px">map</span><span style="color:#A9B7C6"> == </span><span style="color:#CC7832">null</span><span style="color:#A9B7C6">) {</span></div>
<div class="t" style="left:702.5px;top:637px;font-size:28px;color:#A4A3A3;font-family:'Liberation Mono',monospace;letter-spacing:0.52px;-webkit-text-stroke:0.3px currentColor;transform:scaleX(0.82);transform-origin:0 0;">158</div>
<div class="t" style="left:863.6px;top:637px;font-size:28px;color:#BBBBBB;font-family:'Liberation Mono',monospace;letter-spacing:-1.203px;-webkit-text-stroke:0.35px currentColor;"><span style="color:#A9B7C6">            </span><span style="color:#A9B7C6;text-decoration:underline;text-underline-offset:5px;text-decoration-thickness:2px">map</span><span style="color:#A9B7C6"> = </span><span style="color:#CC7832">new</span><span style="color:#A9B7C6"> HashMap&lt;&gt;()</span><span style="color:#CC7832">;</span></div>
<div class="t" style="left:702.5px;top:681px;font-size:28px;color:#606366;font-family:'Liberation Mono',monospace;letter-spacing:0.52px;-webkit-text-stroke:0.3px currentColor;transform:scaleX(0.82);transform-origin:0 0;">159</div>
<div class="t" style="left:863.6px;top:681px;font-size:28px;color:#BBBBBB;font-family:'Liberation Mono',monospace;letter-spacing:-1.203px;-webkit-text-stroke:0.35px currentColor;"><span style="color:#A9B7C6">            json.put(TaskConstant.</span><span style="color:#9876AA;font-style:italic">SOURCE</span><span style="color:#CC7832">,</span><span style="color:#A9B7C6"> </span><span style="color:#A9B7C6;text-decoration:underline;text-underline-offset:5px;text-decoration-thickness:2px">map</span><span style="color:#A9B7C6">)</span><span style="color:#CC7832">;</span></div>
<div class="t" style="left:702.5px;top:725px;font-size:28px;color:#606366;font-family:'Liberation Mono',monospace;letter-spacing:0.52px;-webkit-text-stroke:0.3px currentColor;transform:scaleX(0.82);transform-origin:0 0;">160</div>
<div class="t" style="left:863.6px;top:725px;font-size:28px;color:#BBBBBB;font-family:'Liberation Mono',monospace;letter-spacing:-1.203px;-webkit-text-stroke:0.35px currentColor;"><span style="color:#A9B7C6">        }</span></div>
<div class="t" style="left:702.5px;top:769px;font-size:28px;color:#606366;font-family:'Liberation Mono',monospace;letter-spacing:0.52px;-webkit-text-stroke:0.3px currentColor;transform:scaleX(0.82);transform-origin:0 0;">161</div>
<div class="t" style="left:863.6px;top:769px;font-size:28px;color:#BBBBBB;font-family:'Liberation Mono',monospace;letter-spacing:-1.203px;-webkit-text-stroke:0.35px currentColor;"><span style="color:#A9B7C6">        String ip = JobHistoryHelper.</span><span style="color:#A9B7C6;font-style:italic">getRequestIpAddr</span><span style="color:#A9B7C6">(req)</span><span style="color:#CC7832">;</span></div>
<div class="t" style="left:702.5px;top:813px;font-size:28px;color:#606366;font-family:'Liberation Mono',monospace;letter-spacing:0.52px;-webkit-text-stroke:0.3px currentColor;transform:scaleX(0.82);transform-origin:0 0;">162</div>
<div class="t" style="left:863.6px;top:813px;font-size:28px;color:#BBBBBB;font-family:'Liberation Mono',monospace;letter-spacing:-1.203px;-webkit-text-stroke:0.35px currentColor;"><span style="color:#A9B7C6">        </span><span style="color:#A9B7C6;text-decoration:underline;text-underline-offset:5px;text-decoration-thickness:2px">map</span><span style="color:#A9B7C6">.put(TaskConstant.</span><span style="color:#9876AA;font-style:italic">REQUEST_IP</span><span style="color:#CC7832">,</span><span style="color:#A9B7C6"> ip)</span><span style="color:#CC7832">;</span></div>
<div class="t" style="left:702.5px;top:857px;font-size:28px;color:#606366;font-family:'Liberation Mono',monospace;letter-spacing:0.52px;-webkit-text-stroke:0.3px currentColor;transform:scaleX(0.82);transform-origin:0 0;">163</div>
<div class="t" style="left:863.6px;top:857px;font-size:28px;color:#BBBBBB;font-family:'Liberation Mono',monospace;letter-spacing:-1.203px;-webkit-text-stroke:0.35px currentColor;"><span style="color:#A9B7C6">        String jobId = </span><span style="color:#9876AA">entranceServer</span><span style="color:#A9B7C6">.execute(json)</span><span style="color:#CC7832">;</span></div>
<div class="t" style="left:702.5px;top:901px;font-size:28px;color:#606366;font-family:'Liberation Mono',monospace;letter-spacing:0.52px;-webkit-text-stroke:0.3px currentColor;transform:scaleX(0.82);transform-origin:0 0;">164</div>
<div class="t" style="left:863.6px;top:901px;font-size:28px;color:#BBBBBB;font-family:'Liberation Mono',monospace;letter-spacing:-1.203px;-webkit-text-stroke:0.35px currentColor;"><span style="color:#A9B7C6">        Job job = </span><span style="color:#9876AA">entranceServer</span><span style="color:#A9B7C6">.getJob(jobId).get()</span><span style="color:#CC7832">;</span></div>
<div class="t" style="left:702.5px;top:945px;font-size:28px;color:#606366;font-family:'Liberation Mono',monospace;letter-spacing:0.52px;-webkit-text-stroke:0.3px currentColor;transform:scaleX(0.82);transform-origin:0 0;">165</div>
<div class="t" style="left:863.6px;top:945px;font-size:28px;color:#BBBBBB;font-family:'Liberation Mono',monospace;letter-spacing:-1.203px;-webkit-text-stroke:0.35px currentColor;"><span style="color:#A9B7C6">        JobRequest jobRequest = ((EntranceJob) job).getJobRequest()</span><span style="color:#CC7832">;</span></div>
<svg style="left:842px;top:159px;" width="20" height="25" viewBox="0 0 20 25"><path d="M1,1 H19 V14 L10,23 L1,14Z" fill="#2B2B2B" stroke="#6B6B6B" stroke-width="2"/><path d="M6,10 H14" stroke="#6B6B6B" stroke-width="2"/></svg>
<svg style="left:842px;top:286px;" width="20" height="25" viewBox="0 0 20 25"><path d="M1,24 H19 V11 L10,2 L1,11Z" fill="#2B2B2B" stroke="#6B6B6B" stroke-width="2"/><path d="M6,15 H14" stroke="#6B6B6B" stroke-width="2"/></svg>
<svg style="left:842px;top:335px;" width="20" height="25" viewBox="0 0 20 25"><path d="M1,1 H19 V14 L10,23 L1,14Z" fill="#2B2B2B" stroke="#6B6B6B" stroke-width="2"/><path d="M6,10 H14" stroke="#6B6B6B" stroke-width="2"/></svg>
<svg style="left:842px;top:599px;" width="20" height="25" viewBox="0 0 20 25"><path d="M1,1 H19 V14 L10,23 L1,14Z" fill="#2B2B2B" stroke="#6B6B6B" stroke-width="2"/><path d="M6,10 H14" stroke="#6B6B6B" stroke-width="2"/></svg>
<svg style="left:842px;top:726px;" width="20" height="25" viewBox="0 0 20 25"><path d="M1,24 H19 V11 L10,2 L1,11Z" fill="#2B2B2B" stroke="#6B6B6B" stroke-width="2"/><path d="M6,15 H14" stroke="#6B6B6B" stroke-width="2"/></svg>
<svg style="left:758px;top:327px;" width="34" height="30" viewBox="0 0 34 30"><circle cx="11.4" cy="15" r="9.7" fill="#3E9E3E"/><text x="7.6" y="20.5" font-size="14" font-family="Liberation Serif" fill="#1E3A1E">I</text><path d="M24.3,29 V11" stroke="#DB4848" stroke-width="2.6"/><polygon points="18.8,14 24.3,6.5 29.8,14" fill="#DB4848"/></svg>
<svg style="left:794px;top:328px;" width="28" height="28" viewBox="0 0 28 28"><path d="M19.5,24.5 Q16.5,26 13,26 Q2.5,26 2.5,14.5 Q2.5,3 13.5,3 Q24.5,3 24.5,13 Q24.5,19.5 20.5,19.5 Q17.5,19.5 17.5,16 V8" fill="none" stroke="#BBBBBB" stroke-width="2.4"/><circle cx="13" cy="14" r="4.8" fill="none" stroke="#BBBBBB" stroke-width="2.4"/></svg>
<svg style="left:794px;top:458px;" width="32" height="30" viewBox="0 0 32 30"><circle cx="14" cy="16" r="13.2" fill="#D9484C"/><path d="M10,10 L15,15 L27,3" stroke="#313335" stroke-width="5.5" fill="none"/><path d="M10,10 L15,15 L27,3" stroke="#C4C4C4" stroke-width="3" fill="none"/></svg>
<svg style="left:3321px;top:124px;" width="24" height="22" viewBox="0 0 24 22"><polygon points="12,1 23,21 1,21" fill="#E0A21A"/><rect x="10.5" y="7" width="3" height="8" fill="#2B2B2B"/><rect x="10.5" y="16.5" width="3" height="3" fill="#2B2B2B"/></svg>
<div class="t" style="left:3352.5px;top:125px;font-size:22px;color:#BBBBBB;">29</div>
<svg style="left:3393px;top:124px;" width="26" height="26" viewBox="0 0 26 26"><path d="M2,11 L9,18 L23,3" stroke="#2EA34F" stroke-width="3.5" fill="none"/><path d="M2,24 L6,20 L10,24 L14,20 L18,24" stroke="#2EA34F" stroke-width="1.8" fill="none"/></svg>
<div class="t" style="left:3424px;top:125px;font-size:22px;color:#BBBBBB;">12</div>
<svg style="left:3466px;top:128px;" width="20" height="12" viewBox="0 0 20 12"><polyline points="2,10 10,2 18,10" fill="none" stroke="#AFB1B3" stroke-width="2.4"/></svg>
<svg style="left:3509px;top:132px;" width="20" height="12" viewBox="0 0 20 12"><polyline points="2,2 10,10 18,2" fill="none" stroke="#AFB1B3" stroke-width="2.4"/></svg>
<div style="left:3514px;top:182px;width:28px;height:4px;background:#CC9A06;"></div>
<div style="left:3514px;top:197.8px;width:28px;height:4px;background:#CC9A06;"></div>
<div style="left:3514px;top:203.8px;width:28px;height:4px;background:#CC9A06;"></div>
<div style="left:3514px;top:268px;width:28px;height:4px;background:#CC9A06;"></div>
<div style="left:3514px;top:273.6px;width:28px;height:4px;background:#CC9A06;"></div>
<div style="left:3514px;top:338px;width:28px;height:4px;background:#CC9A06;"></div>
<div style="left:3514px;top:348px;width:28px;height:12px;background:#CC9A06;"></div>
<div style="left:3514px;top:395.5px;width:28px;height:4px;background:#CC9A06;"></div>
<div style="left:3514px;top:451.5px;width:28px;height:4px;background:#CC9A06;"></div>
<div style="left:3514px;top:491.5px;width:28px;height:4px;background:#CC9A06;"></div>
<div style="left:3514px;top:497.5px;width:28px;height:4px;background:#CC9A06;"></div>
<div style="left:3514px;top:505.5px;width:28px;height:12px;background:#CC9A06;"></div>
<div style="left:3514px;top:595px;width:28px;height:4px;background:#CC9A06;"></div>
<div style="left:3514px;top:650px;width:28px;height:4px;background:#CC9A06;"></div>
<div style="left:3514px;top:753px;width:28px;height:4px;background:#CC9A06;"></div>
<div style="left:3514px;top:759.5px;width:28px;height:4px;background:#CC9A06;"></div>
<div style="left:3514px;top:773.5px;width:28px;height:4px;background:#CC9A06;"></div>
<div style="left:3514px;top:849.5px;width:28px;height:4px;background:#CC9A06;"></div>
<div style="left:3514px;top:859.5px;width:28px;height:4px;background:#CC9A06;"></div>
<div style="left:3514px;top:875px;width:28px;height:4px;background:#CC9A06;"></div>
<div style="left:3514px;top:939.5px;width:28px;height:4px;background:#CC9A06;"></div>
<div style="left:3514px;top:272px;width:28px;height:1.5px;background:#7A3A2A;"></div>
<div style="left:3514px;top:955.5px;width:28px;height:4px;background:#2D89C8;"></div>
<div style="left:3522px;top:261px;width:14px;height:61px;background:rgba(120,120,120,0.45);border-radius:7px;"></div>
<div class="t" style="left:55px;top:1006px;font-size:27px;color:#BBBBBB;letter-spacing:0.49px;">Debug:</div>
<svg style="left:184px;top:1006px;" width="34" height="34" viewBox="0 0 34 34"><path d="M8.5,4 V1 H27.5 V18.5 H21" fill="none" stroke="#8494A0" stroke-width="2"/><rect x="1" y="5" width="20" height="21" fill="#3C3F41" stroke="#8494A0" stroke-width="2"/><path d="M4,11.5 H15" stroke="#9FB0BC" stroke-width="2.4"/><polygon points="13,6.5 19,11.5 13,16.5" fill="#9FB0BC"/><rect x="4" y="16.5" width="16" height="6" fill="#1F8DB5"/><circle cx="26.5" cy="26.5" r="4.6" fill="#1FD41F" stroke="#2B2B2B" stroke-width="1.4"/></svg>
<div class="t" style="left:222px;top:1006px;font-size:27px;color:#BBBBBB;letter-spacing:0.99px;">entance-debug</div>
<svg style="left:429px;top:1013px;" width="16" height="16" viewBox="0 0 16 16"><path d="M1,1 L15,15 M15,1 L1,15" stroke="#6F7A80" stroke-width="1.8"/></svg>
<div style="left:158px;top:1042px;width:308px;height:5px;background:#747A80;"></div>
<svg style="left:3451px;top:1007px;" width="25" height="25" viewBox="0 0 25 25"><rect x="9.3" y="0" width="6.4" height="25" fill="#AFB1B3" transform="rotate(0 12.5 12.5)"/><rect x="9.3" y="0" width="6.4" height="25" fill="#AFB1B3" transform="rotate(60 12.5 12.5)"/><rect x="9.3" y="0" width="6.4" height="25" fill="#AFB1B3" transform="rotate(120 12.5 12.5)"/><circle cx="12.5" cy="12.5" r="9.0" fill="#AFB1B3"/><circle cx="12.5" cy="12.5" r="3.75" fill="#3C3F41"/></svg>
<div style="left:3504px;top:1018px;width:25px;height:4px;background:#AFB1B3;"></div>
<div class="t" style="left:127px;top:1064px;font-size:22px;color:#BBBBBB;letter-spacing:0.62px;">Debugger</div>
<svg style="left:280px;top:1065px;" width="24" height="22" viewBox="0 0 24 22"><rect x="0" y="0.5" width="24" height="20.5" fill="#AFB1B3"/><polyline points="8.5,5 14.5,10.75 8.5,16.5" fill="none" stroke="#3C3F41" stroke-width="3"/></svg>
<div class="t" style="left:316px;top:1064px;font-size:22px;color:#BBBBBB;letter-spacing:0.38px;">Console</div>
<div style="left:252px;top:1100px;width:166px;height:4px;background:#747A80;"></div>
<svg style="left:430px;top:1062px;" width="25" height="26" viewBox="0 0 25 26"><path d="M0,4 H24 M0,13 H24 M0,22 H24" stroke="#5C5E60" stroke-width="4"/></svg>
<div style="left:474px;top:1054px;width:2px;height:40px;background:#55595C;"></div>
<svg style="left:494px;top:1056px;" width="28" height="32" viewBox="0 0 28 32"><path d="M1,18 L10,8 L18,16" stroke="#5C5E60" stroke-width="3.6" fill="none"/><polygon points="14,20 25,9 25,20" fill="#5C5E60"/><rect x="1" y="26" width="24" height="4" fill="#5C5E60"/></svg>
<svg style="left:548px;top:1056px;" width="26" height="32" viewBox="0 0 26 32"><rect x="10.5" y="2" width="4" height="13" fill="#5C5E60"/><polygon points="3,14 22,14 12.5,23" fill="#5C5E60"/><rect x="0.5" y="26" width="24" height="4" fill="#5C5E60"/></svg>
<svg style="left:600px;top:1056px;" width="26" height="32" viewBox="0 0 26 32"><rect x="10.5" y="2" width="4" height="13" fill="#5C5E60"/><polygon points="3,14 22,14 12.5,23" fill="#5C5E60"/><rect x="0.5" y="26" width="24" height="4" fill="#5C5E60"/></svg>
<svg style="left:652px;top:1056px;" width="26" height="32" viewBox="0 0 26 32"><rect x="10.5" y="12" width="4" height="11" fill="#5C5E60"/><polygon points="3,14 22,14 12.5,4" fill="#5C5E60"/><rect x="0.5" y="26" width="24" height="4" fill="#5C5E60"/></svg>
<svg style="left:702px;top:1058px;" width="28" height="30" viewBox="0 0 28 30"><path d="M2,3 L13,14 M13,3 L2,14" stroke="#5C5E60" stroke-width="3.6"/><path d="M16,12.5 H24 V26 H10 V18" stroke="#5C5E60" stroke-width="3.6" fill="none"/></svg>
<svg style="left:754px;top:1058px;" width="30" height="32" viewBox="0 0 30 32"><path d="M2,3 L12,13" stroke="#5C5E60" stroke-width="3.6"/><polygon points="16,4 16,18 2,18" fill="#5C5E60"/><path d="M23,15 V29 M19,15 H27 M19,29 H27" stroke="#5C5E60" stroke-width="2.2"/></svg>
<div style="left:800px;top:1054px;width:2px;height:40px;background:#55595C;"></div>
<svg style="left:822px;top:1060px;" width="25" height="27" viewBox="0 0 25 27"><rect x="0" y="0" width="25" height="27" fill="#5C5E60"/><rect x="4" y="10" width="4" height="4" fill="#3C3F41"/><rect x="10.5" y="10" width="4" height="4" fill="#3C3F41"/><rect x="17" y="10" width="4" height="4" fill="#3C3F41"/><rect x="4" y="17" width="4" height="4" fill="#3C3F41"/><rect x="10.5" y="17" width="4" height="4" fill="#3C3F41"/><rect x="17" y="17" width="4" height="4" fill="#3C3F41"/></svg>
<svg style="left:874px;top:1062px;" width="25" height="26" viewBox="0 0 25 26"><path d="M0,3.5 H7 M12,3.5 H25 M0,12.5 H5 M10,12.5 H25 M0,21.5 H3 M8,21.5 H25 M14,0 L6,25" stroke="#5C5E60" stroke-width="3.6"/></svg>
<svg style="left:3506px;top:1063px;" width="32" height="34" viewBox="0 0 34 34"><rect x="0" y="0" width="14" height="10" fill="#AFB1B3"/><rect x="16" y="0" width="8" height="10" fill="#AFB1B3"/><rect x="0" y="12" width="24" height="8" fill="#AFB1B3"/><polygon points="22,24 34,24 28,30" fill="#DDDDDD"/></svg>
<svg style="left:56px;top:1061px;" width="32" height="32" viewBox="0 0 32 32"><path d="M19,24.2 A10,10 0 1 1 14.5,5.5" stroke="#1F9D4C" stroke-width="4" fill="none"/><polygon points="16.5,0.5 28.5,8.8 16.5,17" fill="#1F9D4C"/><rect x="16" y="19" width="10" height="10" fill="#C4C4C4"/></svg>
<svg style="left:56px;top:1113px;" width="30" height="30" viewBox="0 0 30 30"><path d="M4,26 L16,14" stroke="#AFB1B3" stroke-width="5"/><circle cx="20" cy="10" r="6.5" fill="none" stroke="#AFB1B3" stroke-width="5"/><path d="M21,9 L30,0" stroke="#3C3F41" stroke-width="6"/></svg>
<div style="left:50px;top:1160px;width:40px;height:2px;background:#55595C;"></div>
<svg style="left:58px;top:1180px;" width="26" height="26" viewBox="0 0 26 26"><rect x="1" y="1" width="5" height="24" fill="#5F6265"/><polygon points="10,1 25,13 10,25" fill="#5F6265"/></svg>
<svg style="left:60px;top:1234px;" width="22" height="22" viewBox="0 0 22 22"><rect x="2" y="0" width="6" height="22" fill="#AFB1B3"/><rect x="14" y="0" width="6" height="22" fill="#AFB1B3"/></svg>
<div style="left:60px;top:1288px;width:20px;height:20px;background:#D9484C;"></div>
<div style="left:50px;top:1330px;width:40px;height:2px;background:#55595C;"></div>
<svg style="left:56px;top:1348px;" width="30" height="30" viewBox="0 0 30 30"><circle cx="10" cy="19" r="9" fill="#E14A4A"/><circle cx="20" cy="10" r="9" fill="#E14A4A" stroke="#3C3F41" stroke-width="2"/></svg>
<svg style="left:57px;top:1402px;" width="28" height="28" viewBox="0 0 28 28"><circle cx="14" cy="14" r="11" fill="#E14A4A"/><path d="M2,26 L26,2" stroke="#AFB1B3" stroke-width="3"/></svg>
<div style="left:50px;top:1448px;width:40px;height:2px;background:#55595C;"></div>
<svg style="left:56px;top:1468px;" width="28" height="26" viewBox="0 0 28 26"><path d="M1,6 H7 L10,1 H18 L21,6 H27 V25 H1Z" fill="#AFB1B3"/><circle cx="14" cy="15" r="5.5" fill="#3C3F41"/><circle cx="14" cy="15" r="3" fill="#AFB1B3"/></svg>
<div style="left:50px;top:1514px;width:40px;height:2px;background:#55595C;"></div>
<svg style="left:56px;top:1535px;" width="26" height="26" viewBox="0 0 26 26"><rect x="9.8" y="0" width="6.4" height="26" fill="#AFB1B3" transform="rotate(0 13.0 13.0)"/><rect x="9.8" y="0" width="6.4" height="26" fill="#AFB1B3" transform="rotate(60 13.0 13.0)"/><rect x="9.8" y="0" width="6.4" height="26" fill="#AFB1B3" transform="rotate(120 13.0 13.0)"/><circle cx="13.0" cy="13.0" r="9.36" fill="#AFB1B3"/><circle cx="13.0" cy="13.0" r="3.9" fill="#3C3F41"/></svg>
<svg style="left:75px;top:1559px;" width="12" height="8" viewBox="0 0 12 8"><polygon points="0,0 12,0 6,7" fill="#DDDDDD"/></svg>
<div style="left:50px;top:1581px;width:40px;height:2px;background:#55595C;"></div>
<svg style="left:55px;top:1599px;" width="32" height="32" viewBox="0 0 32 32"><path d="M2,30 L14,18" stroke="#AFB1B3" stroke-width="2.5"/><path d="M18,2 L30,14 L24,16 L16,24 L8,16 L16,8Z" fill="#AFB1B3"/></svg>
<svg style="left:114px;top:1120px;" width="26" height="26" viewBox="0 0 26 26"><path d="M13,25 V4 M4,12 L13,3 L22,12" stroke="#5C5E60" stroke-width="3" fill="none"/></svg>
<svg style="left:114px;top:1173px;" width="26" height="26" viewBox="0 0 26 26"><path d="M13,1 V22 M4,14 L13,23 L22,14" stroke="#5C5E60" stroke-width="3" fill="none"/></svg>
<svg style="left:113px;top:1224px;" width="30" height="30" viewBox="0 0 30 30"><path d="M2,3 H28 M2,14 H22 Q28,14 28,20 Q28,26 22,26 H14 M2,25 H6" stroke="#AFB1B3" stroke-width="3" fill="none"/><polygon points="16,20 10,26 16,32" fill="#AFB1B3"/></svg>
<div style="left:106px;top:1268px;width:44px;height:43px;background:#56595B;border-radius:5px;"></div>
<svg style="left:114px;top:1274px;" width="30" height="32" viewBox="0 0 30 32"><path d="M1,8 H9 M1,16 H9 M1,28 H29" stroke="#C8C8C8" stroke-width="3"/><path d="M20,1 V18 M13,12 L20,19 L27,12" stroke="#C8C8C8" stroke-width="3" fill="none"/></svg>
<svg style="left:113px;top:1328px;" width="30" height="30" viewBox="0 0 30 30"><rect x="7" y="1" width="16" height="7" fill="#AFB1B3"/><rect x="1" y="10" width="28" height="11" rx="2" fill="#AFB1B3"/><rect x="7" y="17" width="16" height="12" fill="#3C3F41" stroke="#AFB1B3" stroke-width="3"/></svg>
<svg style="left:116px;top:1378px;" width="24" height="30" viewBox="0 0 24 30"><rect x="1.7" y="3.8" width="20.2" height="4" fill="#AFB1B3"/><rect x="9" y="0" width="6" height="5" fill="#AFB1B3"/><path d="M4,9.5 H20 V25 Q20,28 17,28 H7 Q4,28 4,25Z" fill="#AFB1B3"/></svg>
<div class="t" style="left:182.5px;top:1113px;font-size:28px;color:#BBBBBB;font-family:'Liberation Mono',monospace;letter-spacing:-1.203px;-webkit-text-stroke:0.35px currentColor;">Connected to the target VM, address: 'localhost:5008', transport: 'socket'</div>
<div style="left:140px;top:2156px;width:142px;height:40px;background:#2C2E30;"></div>
<svg style="left:62px;top:2164px;" width="20" height="26" viewBox="0 0 20 26"><circle cx="4" cy="4" r="3" fill="#AFB1B3"/><circle cx="4" cy="22" r="3" fill="#AFB1B3"/><circle cx="16" cy="6" r="3" fill="#AFB1B3"/><path d="M4,4 V22 M16,6 Q16,14 4,18" stroke="#AFB1B3" stroke-width="3" fill="none"/></svg>
<div class="t" style="left:92px;top:2164px;font-size:22px;color:#BBBBBB;letter-spacing:1.45px;">Git</div>
<svg style="left:164px;top:2163px;" width="28" height="28" viewBox="0 0 28 28"><ellipse cx="12" cy="15" rx="8" ry="10" fill="#C8C8C8"/><path d="M1,10 H23 M1,17 H23 M3,24 H21 M7,2 L10,5 M17,2 L14,5" stroke="#C8C8C8" stroke-width="2.5"/><circle cx="21" cy="22" r="5" fill="#1FD41F" stroke="#2C2E30" stroke-width="1.5"/></svg>
<div class="t" style="left:197px;top:2164px;font-size:22px;color:#FFFFFF;font-weight:700;letter-spacing:-0.23px;">Debug</div>
<svg style="left:306px;top:2164px;" width="22" height="22" viewBox="0 0 22 22"><rect x="0" y="1" width="4" height="4" fill="#AFB1B3"/><rect x="0" y="9" width="4" height="4" fill="#AFB1B3"/><rect x="0" y="17" width="4" height="4" fill="#AFB1B3"/><path d="M7,3 H22 M7,11 H22 M7,19 H22" stroke="#AFB1B3" stroke-width="3.5"/></svg>
<div class="t" style="left:337px;top:2164px;font-size:22px;color:#BBBBBB;letter-spacing:-0.39px;">TODO</div>
<svg style="left:441px;top:2165px;" width="22" height="22" viewBox="0 0 22 22"><circle cx="11" cy="11" r="10" fill="#AFB1B3"/><rect x="9.2" y="4" width="3.6" height="9" fill="#3C3F41"/><rect x="9.2" y="15" width="3.6" height="3.5" fill="#3C3F41"/></svg>
<div class="t" style="left:472px;top:2164px;font-size:22px;color:#BBBBBB;letter-spacing:0.44px;">Problems</div>
<svg style="left:612px;top:2165px;" width="24" height="22" viewBox="0 0 24 22"><rect x="0" y="0" width="24" height="22" fill="#AFB1B3"/><polyline points="4,6 9,10 4,14" fill="none" stroke="#3C3F41" stroke-width="2.2"/><path d="M10,17 H19" stroke="#3C3F41" stroke-width="2.2"/></svg>
<div class="t" style="left:644px;top:2164px;font-size:22px;color:#BBBBBB;letter-spacing:0.41px;">Terminal</div>
<svg style="left:774px;top:2164px;" width="22" height="24" viewBox="0 0 22 24"><rect x="0" y="0" width="22" height="24" fill="#AFB1B3"/><text x="2" y="15" font-size="11" font-weight="700" font-family="Liberation Sans" fill="#3C3F41">TC</text><path d="M3,19 H12" stroke="#3C3F41" stroke-width="2"/></svg>
<div class="t" style="left:806px;top:2164px;font-size:22px;color:#BBBBBB;letter-spacing:0.62px;">TeamCity</div>
<svg style="left:940px;top:2163px;" width="26" height="26" viewBox="0 0 26 26"><g transform="rotate(-45 13 13)"><rect x="3" y="2" width="20" height="7" fill="#AFB1B3"/><rect x="11" y="8" width="5" height="18" fill="#AFB1B3"/></g></svg>
<div class="t" style="left:974px;top:2164px;font-size:22px;color:#BBBBBB;letter-spacing:0.77px;">Build</div>
<svg style="left:1067px;top:2163px;" width="26" height="26" viewBox="0 0 26 26"><path d="M13,2 L25,8 L13,14 L1,8Z" fill="#AFB1B3"/><path d="M1,13 L13,19 L25,13 M1,18 L13,24 L25,18" stroke="#AFB1B3" stroke-width="2.5" fill="none"/></svg>
<div class="t" style="left:1100px;top:2164px;font-size:22px;color:#BBBBBB;letter-spacing:0.49px;">Dependencies</div>
<svg style="left:3388px;top:2163px;" width="27" height="27" viewBox="0 0 27 27"><circle cx="13.5" cy="13.5" r="13" fill="#1F9E4D"/><text x="7.5" y="21" font-size="19" font-weight="700" font-family="Liberation Sans" fill="#FFFFFF">2</text></svg>
<div class="t" style="left:3423px;top:2164px;font-size:22px;color:#BBBBBB;letter-spacing:0.19px;">Event Log</div>
<svg style="left:12px;top:2206px;" width="25" height="24" viewBox="0 0 25 24"><rect x="6" y="1.5" width="17" height="17" fill="none" stroke="#AFB1B3" stroke-width="2.5"/><path d="M2,5 V22 H19" stroke="#AFB1B3" stroke-width="2.5" fill="none"/></svg>
<div class="t" style="left:61.7px;top:2206px;font-size:22px;color:#BBBBBB;letter-spacing:0.47px;">Error running 'entance-debug': Unable to open debugger port (localhost:5005): java.net.ConnectException "Connection refused (Connection refused)" (12 minutes ago)</div>
<div class="t" style="left:2785px;top:2206px;font-size:22px;color:#BBBBBB;letter-spacing:0.74px;">158:35</div>
<div class="t" style="left:2879px;top:2206px;font-size:22px;color:#BBBBBB;letter-spacing:-0.67px;">LF</div>
<div class="t" style="left:2927px;top:2206px;font-size:22px;color:#BBBBBB;letter-spacing:0.92px;">UTF-8</div>
<div class="t" style="left:3016.5px;top:2206px;font-size:22px;color:#BBBBBB;letter-spacing:0.64px;">4 spaces</div>
<div class="t" style="left:3167px;top:2206px;font-size:22px;color:#BBBBBB;letter-spacing:0.86px;">dev-1.3.0-bug-ldh-flink2</div>
<svg style="left:3135px;top:2204px;" width="22" height="28" viewBox="0 0 22 28"><circle cx="4" cy="4" r="3" fill="#AFB1B3"/><circle cx="4" cy="24" r="3" fill="#AFB1B3"/><circle cx="18" cy="6" r="3" fill="#AFB1B3"/><path d="M4,4 V24 M18,6 Q18,16 4,20" stroke="#AFB1B3" stroke-width="3" fill="none"/></svg>
<svg style="left:3437px;top:2204px;" width="26" height="26" viewBox="0 0 26 26"><path d="M3,11 V5 A6,6 0 0 1 15,5" stroke="#AFB1B3" stroke-width="3" fill="none"/><rect x="8" y="12" width="17" height="14" fill="#AFB1B3"/></svg>
<svg style="left:3484px;top:2208px;" width="32" height="20" viewBox="0 0 32 20"><path d="M2,10 H12 M13,1 V19 M19,1 V19 M20,10 H30" stroke="#E05555" stroke-width="3"/></svg>
<svg style="left:3533px;top:2201px;" width="30" height="30" viewBox="0 0 30 30"><rect x="0" y="0" width="30" height="30" fill="#3A8A3E"/><path d="M7,6 H4 V24 H7 M23,6 H26 V24 H23 M10,8 H20 M15,8 V23" stroke="#1F2A1F" stroke-width="2.2" fill="none"/></svg>
<svg style="left:2846px;top:-10px;" width="84" height="110" viewBox="0 0 84 110"><rect x="6" y="10" width="72" height="91.6" rx="7" fill="none" stroke="#F54A47" stroke-width="8"/></svg>
<svg style="left:2870px;top:95px;" width="70" height="145" viewBox="0 0 70 145"><polygon points="30,9 51,40.7 43,43.9 45.9,134.4 42.2,134.4 24,46.3 15.2,45.5" fill="#F54A47" stroke="#F54A47" stroke-width="2" stroke-linejoin="round"/></svg>
<svg style="left:780px;top:1150px;" width="150" height="95" viewBox="0 0 150 95"><polygon points="15.2,19.2 60.2,21.2 56.9,30.8 136.6,84.3 134.3,87.6 47.3,48.6 39.7,56.2" fill="#F54A47" stroke="#F54A47" stroke-width="2" stroke-linejoin="round"/></svg>
</body></html>
